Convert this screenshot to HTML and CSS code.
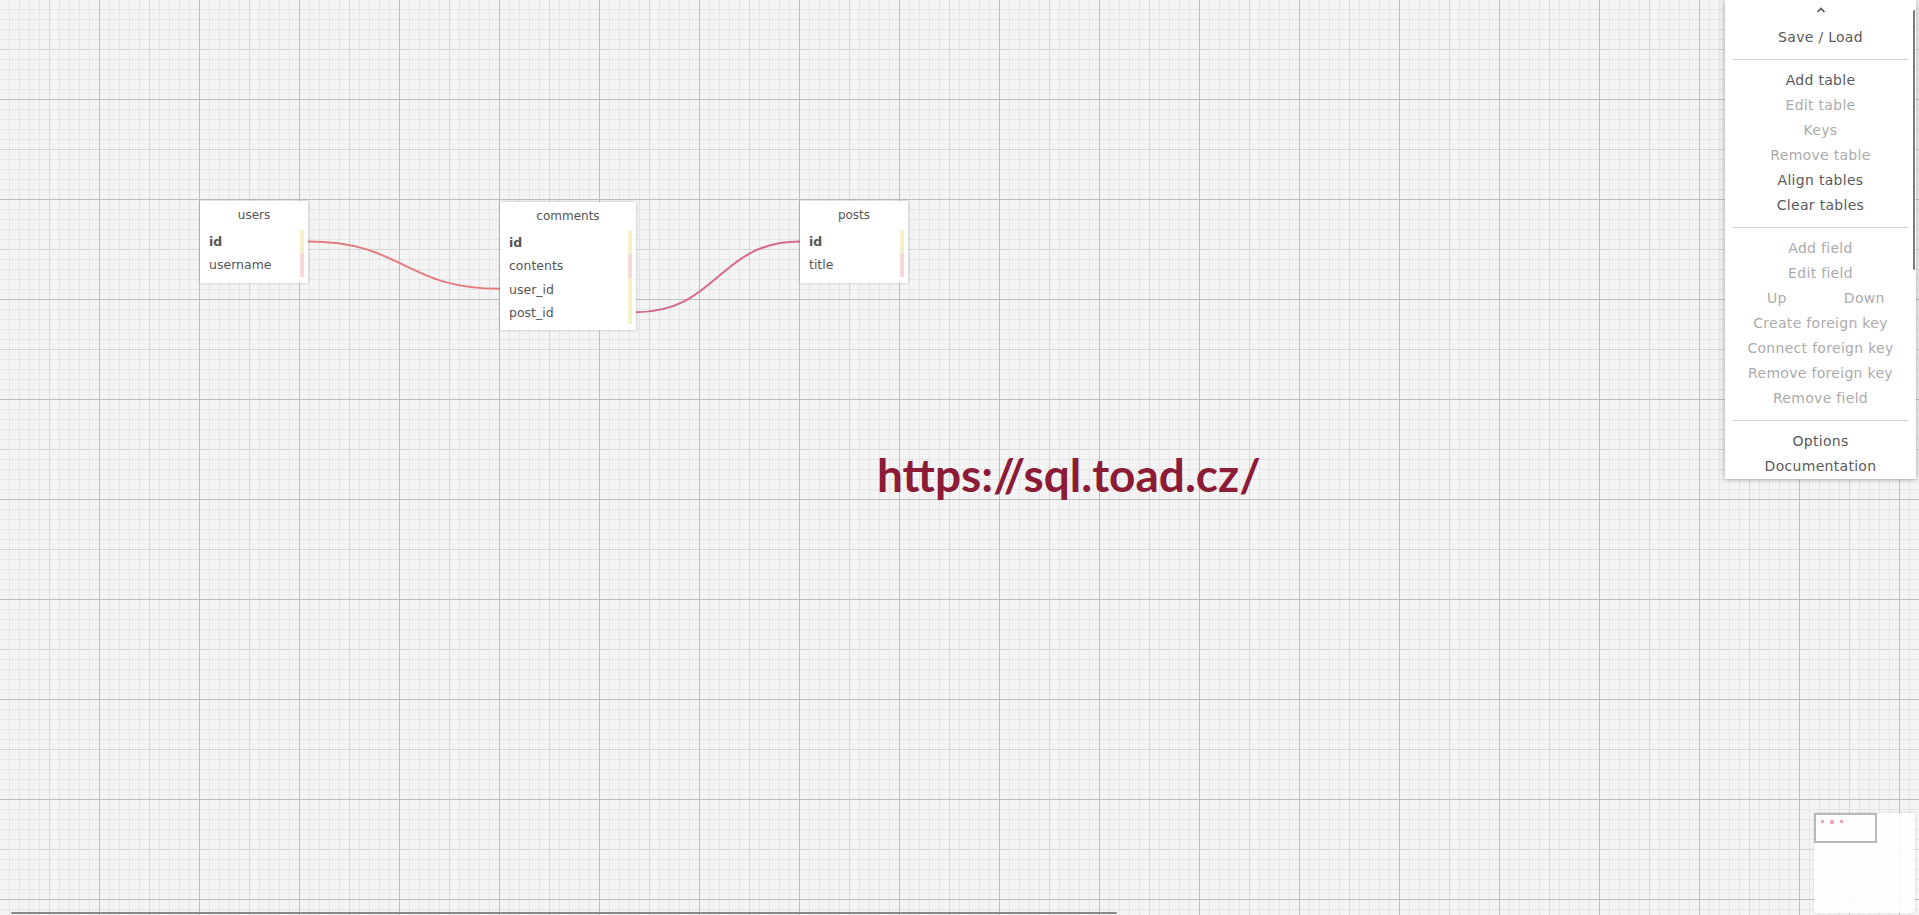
FILE: index.html
```html
<!DOCTYPE html>
<html lang="en">
<head>
<meta charset="utf-8">
<title>WWW SQL Designer</title>
<link rel="stylesheet" href="styles.css">
</head>
<body>
<div class="canvas">
  <svg class="relations" width="1919" height="915" viewBox="0 0 1919 915">
    <path class="rel rel-a" d="M308 241.5 C404 241.5 404 288.8 500 288.8"/>
    <path class="rel rel-b" d="M636 312.2 C718 312.2 718 241.5 800 241.5"/>
  </svg>

  <div class="table t-users">
    <div class="title">users</div>
    <div class="rows">
      <div class="row pk k-y">id</div>
      <div class="row k-p">username</div>
    </div>
  </div>

  <div class="table t-comments">
    <div class="title">comments</div>
    <div class="rows">
      <div class="row pk k-y">id</div>
      <div class="row k-p">contents</div>
      <div class="row k-y">user_id</div>
      <div class="row k-y">post_id</div>
    </div>
  </div>

  <div class="table t-posts">
    <div class="title">posts</div>
    <div class="rows">
      <div class="row pk k-y">id</div>
      <div class="row k-p">title</div>
    </div>
  </div>

  <div class="watermark">https://sql.toad.cz/</div>
</div>

<div class="menu">
  <div class="caret">
    <svg width="10" height="6" viewBox="0 0 10 6"><path d="M1.5 5 L5 1.5 L8.5 5" fill="none" stroke="#555" stroke-width="1.6"/></svg>
  </div>
  <div class="item">Save / Load</div>
  <div class="sep"></div>
  <div class="item">Add table</div>
  <div class="item off">Edit table</div>
  <div class="item off">Keys</div>
  <div class="item off">Remove table</div>
  <div class="item">Align tables</div>
  <div class="item">Clear tables</div>
  <div class="sep"></div>
  <div class="item off">Add field</div>
  <div class="item off">Edit field</div>
  <div class="item off split"><span>Up</span><span>Down</span></div>
  <div class="item off">Create foreign key</div>
  <div class="item off">Connect foreign key</div>
  <div class="item off">Remove foreign key</div>
  <div class="item off">Remove field</div>
  <div class="sep"></div>
  <div class="item">Options</div>
  <div class="item">Documentation</div>
  <div class="menu-scroll"></div>
</div>

<div class="minimap">
  <div class="mini-port"></div>
  <div class="mini-t mini-users"></div>
  <div class="mini-t mini-comments"></div>
  <div class="mini-t mini-posts"></div>
</div>

<div class="scroll-h"></div>
</body>
</html>
```

FILE: styles.css
```css
html, body {
  margin: 0;
  padding: 0;
  width: 1919px;
  height: 915px;
  overflow: hidden;
}

body {
  position: relative;
  font-family: "DejaVu Sans", Verdana, sans-serif;
  background-color: #f4f4f4;
  background-image:
    linear-gradient(to right, transparent 99px, #bfbfbf 99px, #bfbfbf 100px, transparent 100px),
    linear-gradient(to bottom, transparent 99px, #bfbfbf 99px, #bfbfbf 100px, transparent 100px),
    linear-gradient(to right, transparent 49px, #d6d6d6 49px, #d6d6d6 50px, transparent 50px),
    linear-gradient(to bottom, transparent 49px, #d6d6d6 49px, #d6d6d6 50px, transparent 50px),
    linear-gradient(to right, transparent 9px, #e5e5e5 9px, #e5e5e5 10px, transparent 10px),
    linear-gradient(to bottom, transparent 9px, #e5e5e5 9px, #e5e5e5 10px, transparent 10px);
  background-size: 100px 100px, 100px 100px, 50px 50px, 50px 50px, 10px 10px, 10px 10px;
}

.canvas {
  position: relative;
  width: 1919px;
  height: 915px;
}

.relations {
  position: absolute;
  left: 0;
  top: 0;
}

.rel {
  fill: none;
  stroke-width: 2;
}

.rel-a { stroke: #e27c7e; }
.rel-b { stroke: #d76891; }

/* tables */
.table {
  position: absolute;
  background: #fff;
  color: #555;
  box-shadow: 0 0 3px rgba(0, 0, 0, 0.22);
}

.t-users { left: 200px; top: 201px; width: 108px; }
.t-comments { left: 500px; top: 202px; width: 136px; }
.t-posts { left: 800px; top: 201px; width: 108px; }

.title {
  height: 29px;
  line-height: 29px;
  text-align: center;
  font-size: 12px;
}

.rows {
  padding-bottom: 6px;
}

.row {
  position: relative;
  height: 23.3px;
  line-height: 23.3px;
  padding-left: 9px;
  font-size: 12.5px;
}

.row.pk {
  font-weight: bold;
}

.row::after {
  content: "";
  position: absolute;
  right: 4px;
  top: 0;
  bottom: 0;
  width: 4px;
}

.k-y::after { background: #f4f1c6; }
.k-p::after { background: #f9d8d9; }

.watermark {
  position: absolute;
  left: 877px;
  top: 452px;
  font-family: Lato, "Open Sans", sans-serif;
  font-weight: bold;
  font-size: 46px;
  line-height: 46px;
  color: #8c1b36;
  white-space: nowrap;
}

/* menu */
.menu {
  position: absolute;
  left: 1725px;
  top: 0;
  width: 191px;
  background: #fff;
  box-shadow: 0 0 6px rgba(0, 0, 0, 0.35);
  color: #5a5a5a;
  font-size: 14px;
  letter-spacing: 0.3px;
}

.caret {
  height: 25px;
  display: flex;
  justify-content: center;
  padding-top: 7px;
  box-sizing: border-box;
}

.caret svg {
  display: block;
}

.item {
  height: 25px;
  line-height: 25px;
  text-align: center;
  white-space: nowrap;
}

.item.off {
  color: #ababab;
}

.item.split {
  display: flex;
  padding: 0 8px;
}

.item.split span {
  flex: 1;
  text-align: center;
}

.sep {
  height: 1px;
  background: #d4d4d4;
  margin: 9px 8px 8px;
}

.menu-scroll {
  position: absolute;
  right: 1px;
  top: 10px;
  width: 2px;
  height: 260px;
  background: #7d7d7d;
  border-radius: 1px;
}

/* minimap */
.minimap {
  position: absolute;
  left: 1814px;
  top: 813px;
  width: 101px;
  height: 100px;
  background: rgba(255, 255, 255, 0.88);
  box-shadow: 0 0 2px rgba(0, 0, 0, 0.15);
}

.mini-port {
  position: absolute;
  left: 0;
  top: 0;
  width: 63px;
  height: 30px;
  box-sizing: border-box;
  border: 2px solid #b8b8b8;
}

.mini-t {
  position: absolute;
  background: #e9a3ba;
}

.mini-users { left: 7px; top: 7px; width: 3px; height: 3px; }
.mini-comments { left: 16px; top: 7px; width: 4px; height: 4px; }
.mini-posts { left: 26px; top: 7px; width: 3px; height: 3px; }

.scroll-h {
  position: absolute;
  left: 11px;
  bottom: 1px;
  width: 1106px;
  height: 2px;
  background: #888;
  border-radius: 1px;
}
```
